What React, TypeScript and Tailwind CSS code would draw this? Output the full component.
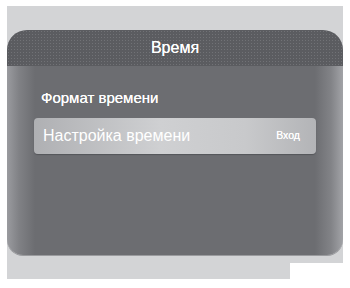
import React from 'react';

export default function App() {
  return (
    <div className="w-[350px] h-[288px] bg-white pt-[6px] pl-[7px]" style={{ fontFamily: '"Liberation Sans", Arial, sans-serif' }}>
      <div className="relative w-[336px] h-[273px] bg-[#d3d4d6] pt-[24px]">
        {/* panel */}
        <div className="w-[336px] rounded-t-[20px] rounded-b-[16px] overflow-hidden shadow-[0_1px_0_#9a9b9e]">
          {/* header */}
          <div className="h-[36px] flex items-center justify-center bg-[#5b5c60] bg-[radial-gradient(#717276_0.9px,transparent_1px)] bg-[size:3px_3px]">
            <span className="text-white text-[16px] [text-shadow:0_0_0.4px_#fff]">Время</span>
          </div>
          {/* body */}
          <div className="h-[189px] bg-[linear-gradient(to_right,#9a9b9f_0px,#808185_12px,#6c6d71_28px,#6c6d71_308px,#828387_324px,#a2a3a7_336px)] pt-[22px] px-[27px]">
            <div className="text-white text-[15px] pl-[7px] h-[20px] leading-[20px] [text-shadow:0_0_0.4px_#fff]">Формат времени</div>
            <div className="mt-[10px] h-[36px] rounded-[4px] bg-[linear-gradient(to_right,#afb0b3,#cfd0d2_45%,#c8c9cb_75%,#b3b4b7)] shadow-[0_1px_1px_#55565a] flex items-center justify-between pl-[9px] pr-[16px]">
              <span className="text-white text-[16px]">Настройка времени</span>
              <span className="text-white text-[10.5px] [text-shadow:0_0_0.4px_#fff]">Вход</span>
            </div>
          </div>
        </div>
        {/* white notch */}
        <div className="absolute right-0 bottom-0 w-[53px] h-[16px] bg-white" />
      </div>
    </div>
  );
}
